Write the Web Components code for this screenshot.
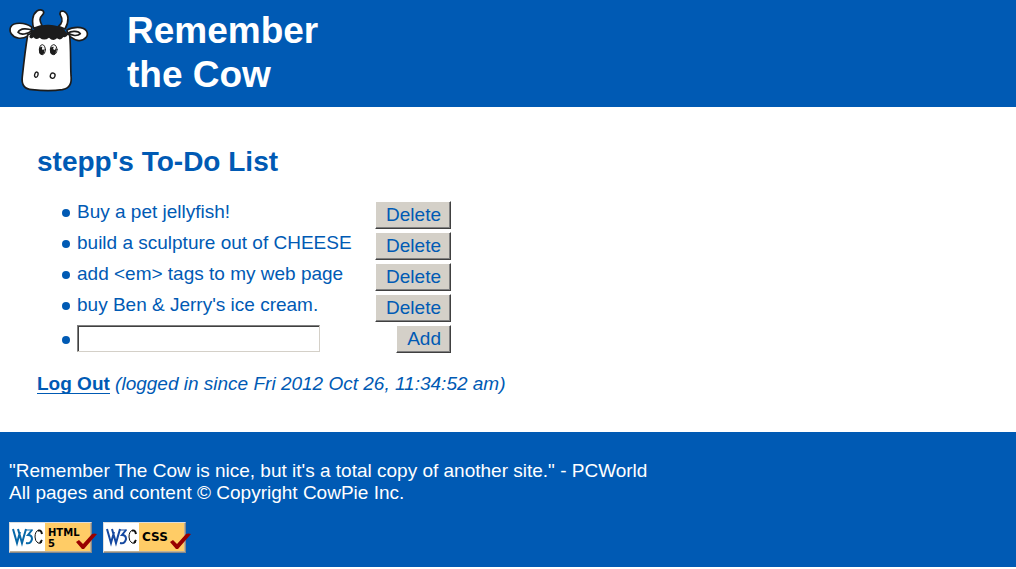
<!DOCTYPE html>
<html lang="en">
<head>
<meta charset="utf-8">
<title>Remember the Cow</title>
<style>
  body { margin: 0; background: #fff; color: #005ab4; font: 19px/22px "Liberation Sans", Arial, sans-serif; }
</style>
</head>
<body>
<cow-page>
  <cow-header slot="header"><span>Remember</span><br><span>the Cow</span></cow-header>
  <todo-list owner="stepp">
    <todo-item>Buy a pet jellyfish!</todo-item>
    <todo-item>build a sculpture out of CHEESE</todo-item>
    <todo-item>add &lt;em&gt; tags to my web page</todo-item>
    <todo-item>buy Ben &amp; Jerry's ice cream.</todo-item>
    <todo-item kind="new"></todo-item>
  </todo-list>
  <session-info>(logged in since Fri 2012 Oct 26, 11:34:52 am)</session-info>
  <cow-footer slot="footer">
    <span>"Remember The Cow is nice, but it's a total copy of another site." - PCWorld<br>All pages and content © Copyright CowPie Inc.</span>
    <w3c-badge slot="badges" kind="html">HTML<br>5</w3c-badge>
    <w3c-badge slot="badges" kind="css">CSS</w3c-badge>
  </cow-footer>
</cow-page>
<script>
function define(name, render) {
  customElements.define(name, class extends HTMLElement {
    constructor() {
      super();
      this.attachShadow({ mode: "open" });
    }
    connectedCallback() {
      this.shadowRoot.innerHTML = render(this);
    }
  });
}

define("cow-page", () => `
  <style>
    :host { display: block; }
    main { padding: 38px 37px 37px; }
  </style>
  <slot name="header"></slot>
  <main><slot></slot></main>
  <slot name="footer"></slot>`);

define("cow-logo", () => `
  <style>
    :host { display: block; flex: none; width: 80px; height: 84px; }
    svg { display: block; width: 100%; height: 100%; }
  </style>
  <svg viewBox="0 0 240 252" role="img" aria-label="Cow" fill="#fff" stroke="#1c1c1c" stroke-width="5" stroke-linejoin="round" stroke-linecap="round">
    <path d="M74 58C68 38 70 16 84 6Q93 0 102 5Q107 12 100 18C90 27 92 36 99 50Z"/>
    <path d="M148 52C160 44 162 31 155 20C150 10 155 4 164 7C180 14 181 38 168 60Z"/>
    <path d="M68 54C48 40 14 38 5 54C-1 68 8 83 27 87C42 91 52 83 66 77Z"/>
    <path d="M174 63C190 53 222 51 232 65C241 80 229 93 211 95C196 96 188 84 176 78Z"/>
    <path d="M27 70C34 56 56 58 70 64C56 76 34 79 27 70Z"/>
    <path d="M177 72C188 64 209 66 214 74C207 82 188 81 177 72Z"/>
    <path d="M56 78C49 120 44 165 40 202C36 230 49 241 69 242C96 245 132 246 160 242C184 238 189 222 186 200C184 157 186 121 182 78C143 60 90 58 56 78Z"/>
    <path fill="#1c1c1c" stroke="none" d="M61 84C68 57 93 46 118 47C146 48 169 57 176 78Q172 86 163 84Q155 96 144 88Q132 99 120 86Q105 97 92 86Q80 94 74 85Q66 92 61 84Z"/>
    <g stroke-width="3"><ellipse cx="100" cy="122" rx="9" ry="15"/><ellipse cx="134" cy="122" rx="10" ry="15"/></g>
    <g fill="#1c1c1c" stroke="none"><ellipse cx="98" cy="125" rx="8" ry="12"/><ellipse cx="132" cy="125" rx="9" ry="12"/></g>
    <g stroke="none"><ellipse cx="102" cy="118" rx="3" ry="5"/><ellipse cx="136" cy="118" rx="3" ry="5"/></g>
    <g stroke-width="4"><ellipse cx="82" cy="197" rx="5" ry="8" transform="rotate(15 82 197)"/><ellipse cx="131" cy="200" rx="7" ry="8" transform="rotate(20 131 200)"/></g>
  </svg>`);

define("cow-header", () => `
  <style>
    :host { display: block; background: #005ab4; color: #fff; }
    header { display: flex; gap: 38px; padding: 9px; }
    h1 { margin: 0; font-size: 37px; line-height: 44px; }
    cow-logo { margin-bottom: 5px; }
  </style>
  <header><cow-logo></cow-logo><h1><slot></slot></h1></header>`);

define("todo-list", el => `
  <style>
    :host { display: block; }
    h2 { margin: 0 0 22px; font-size: 28px; line-height: 34px; }
    .items { display: grid; gap: 3px; max-width: 374px; margin-left: 40px; }
  </style>
  <h2>${el.getAttribute("owner")}'s To-Do List</h2>
  <div class="items" role="list"><slot></slot></div>`);

define("todo-item", el => {
  const isNew = el.getAttribute("kind") === "new";
  return `
  <style>
    :host { display: list-item; list-style: none; }
    form { display: flex; align-items: flex-start; justify-content: space-between; position: relative; margin: 0; min-height: 28px; }
    form::before { content: ""; position: absolute; left: -15px; top: ${isNew ? 11 : 8}px; width: 8px; height: 8px; border-radius: 50%; background: currentColor; }
    button { box-sizing: border-box; height: 28px; margin: 0; padding: 0 9px 0 10px; font: inherit; color: inherit; background: #d4d0c8;
      border: 1px solid; border-color: #fff #404040 #404040 #fff; box-shadow: inset -1px -1px #808080; }
    input { box-sizing: border-box; width: 243px; height: 27px; margin: 0; padding: 1px 3px; font: inherit; color: inherit; background: #fff;
      border: 1px solid; border-color: #808080 #d4d0c8 #d4d0c8 #808080; box-shadow: inset 1px 1px #404040; }
  </style>
  <form role="listitem">${isNew
    ? `<input type="text" aria-label="New item"><button type="button">Add</button>`
    : `<span><slot></slot></span><button type="button">Delete</button>`}</form>`;
});

define("session-info", () => `
  <style>
    :host { display: block; margin-top: 20px; }
    a { color: inherit; font-weight: bold; text-decoration: none; border-bottom: 1px solid; line-height: 19px; display: inline-block; }
  </style>
  <a href="#">Log Out</a> <em><slot></slot></em>`);

define("cow-footer", () => `
  <style>
    :host { display: block; background: #005ab4; color: #fff; }
    footer { padding: 28px 9px 14px; }
    .badges { display: flex; gap: 6px; margin-top: 18px; }
  </style>
  <footer><slot></slot><div class="badges"><slot name="badges"></slot></div></footer>`);

define("w3c-badge", el => {
  const css = el.getAttribute("kind") === "css";
  return `
  <style>
    :host { display: block; width: 88px; height: 31px; }
    a { display: flex; box-sizing: border-box; position: relative; width: 83px; height: 31px; color: #000; text-decoration: none; background: #fc6;
      border: 1px solid; border-color: #ddd #888 #888 #ddd; box-shadow: inset -1px -1px #bbb09a; }
    .mark { width: 35px; height: 28px; background: #fff; }
    .label { display: flex; align-items: center; padding-left: 3px; font: bold ${css ? "12px" : "10px"}/11px "DejaVu Sans", sans-serif; }
    .tick { position: absolute; left: 65px; top: 10px; }
  </style>
  <a href="#">
    <svg class="mark" viewBox="0 0 35 28" fill="none" stroke="${css ? "#1548a0" : "#0868a8"}" stroke-width="2" aria-label="W3C" role="img">
      <path d="M3 6L7 20L10 9M8 6L12 20L16 6"/><path stroke-width="1" d="M15 7H23"/><path d="M22 7L18 12Q22 12 22 16Q21 21 16 20"/>
      <path stroke="#111" stroke-width="1" d="M32 19Q30 21 28 20Q25 18 25 14Q25 8 29 7"/><path stroke="#111" d="M28 8Q31 6 32 11M30 20L32 17"/>
    </svg>
    <span class="label"><span><slot></slot></span></span>
    <svg class="tick" width="23" height="18" viewBox="0 0 23 18"><path fill="#900" d="M1 9L4 7L8 11L17 1Q19 0 22 1L9 16H7Z"/></svg>
  </a>`;
});
</script>
</body>
</html>
